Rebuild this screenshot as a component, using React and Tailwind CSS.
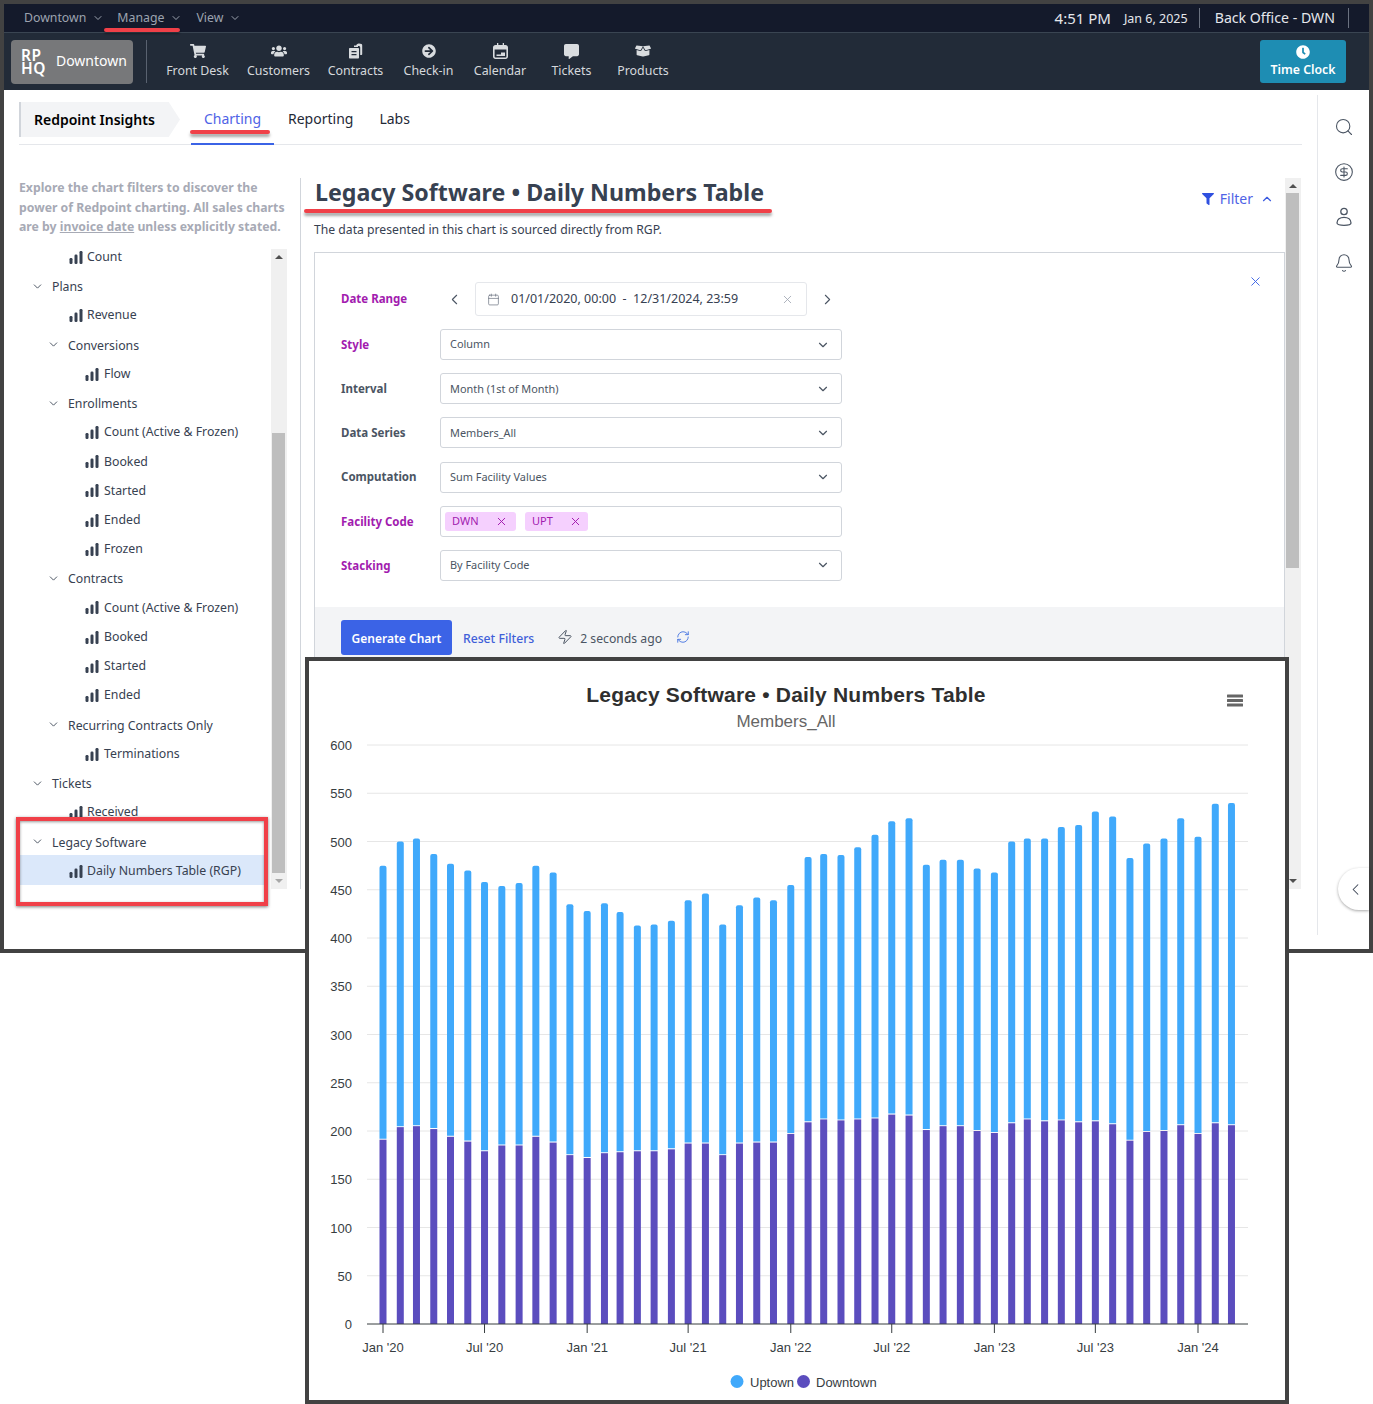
import React from "react";
import { ChevronDown, ChevronUp, ChevronLeft, ChevronRight, X, Calendar, Zap, RefreshCw, Search, CircleDollarSign, Bell } from "lucide-react";
import { FaShoppingCart, FaUsers, FaArrowCircleRight, FaCommentAlt, FaBoxOpen, FaClock, FaFilter } from "react-icons/fa";

const totals = [475,500,503,487,477,470,458,454,457,475,468,435,428,436,427,413,414,418,439,446,414,434,442,439,455,484,487,486,494,507,521,524,476,481,481,472,468,500,503,503,515,517,531,526,483,498,503,524,505,539,540];
const lows = [191,204,205,202,194,189,179,185,185,194,188,175,172,177,178,179,179,181,187,187,175,187,188,188,197,209,212,211,212,213,217,216,201,205,205,200,198,208,212,210,211,209,210,207,190,199,200,206,197,208,206];

const barX = (i) => 383 + ((Date.UTC(2020, i, 1) - Date.UTC(2020, 0, 1)) / 864e5) * (815 / 1461);
const valY = (v) => 1324 - v * 0.965;

function ContractsIcon() {
  return (
    <svg width="16" height="16" viewBox="0 0 16 16" fill="currentColor">
      <path d="M6 2.5h4v1.5H6z M11 0.5l2.5.6c.5.2.7.6.7 1.1V11c0 .6-.4 1-1 1h-1V4.5c0-.9-.6-1.5-1.5-1.5H8c.3-1.3 1.5-2.6 3-2.5z" />
      <path fillRule="evenodd" d="M2 5h8c.6 0 1 .4 1 1v8.5c0 .6-.4 1-1 1H2c-.6 0-1-.4-1-1V6c0-.6.4-1 1-1zm1.5 3v1.3h5V8zm0 3v1.3h5V11z" />
    </svg>
  );
}

function CalendarIcon() {
  return (
    <svg width="15" height="16" viewBox="0 0 15 16" fill="currentColor">
      <path fillRule="evenodd" d="M4 0h1.3v2h4.4V0H11v2h1.5C13.9 2 15 3 15 4.400v9.200C15 15 13.900 16 12.500 16h-10C1.100 16 0 15 0 13.600V4.400C0 3 1.100 2 2.500 2H4zM1.600 6.500v7c0 .6.400 1 1 1h9.800c.6 0 1-.4 1-1v-7z" />
      <path d="M8 9.500h4V13H3.500v-1.500H8z" />
    </svg>
  );
}

function BarsIcon() {
  return (
    <svg width="14" height="13" viewBox="0 0 14 13" fill="#374151" className="shrink-0 translate-y-[1px]">
      <rect x="0.500" y="7" width="3" height="6" rx="1.200" />
      <rect x="5.500" y="3.500" width="3" height="9.500" rx="1.200" />
      <rect x="10.500" y="0" width="3" height="13" rx="1.200" />
    </svg>
  );
}

function UserIcon() {
  return (
    <svg width="16" height="20" viewBox="0 0 16 20" fill="none" stroke="#4b5563" strokeWidth="1.300">
      <circle cx="8" cy="4.500" r="3.200" />
      <path d="M1 16c0-3.500 3-5.700 7-5.700s7 2.200 7 5.700c0 1.300-3 2.300-7 2.300s-7-1-7-2.300z" />
    </svg>
  );
}

function NavItem({ icon, label, w }) {
  return (
    <div className="flex flex-col items-center pb-[3px]" style={{ width: w }}>
      <div className="h-[20px] flex items-center justify-center text-[#d9dcdf] text-[16px]">{icon}</div>
      <div className="text-[12.400px] leading-[17px] mt-[1px] text-[#d5d8dc] whitespace-nowrap">{label}</div>
    </div>
  );
}

function Scrollbar({ thumbTop, thumbH, className, darkDown }) {
  return (
    <div className={"relative bg-[#f0f0f0] shrink-0 " + className}>
      <div className="absolute top-[6px] left-1/2 -translate-x-1/2 w-0 h-0 border-x-[4px] border-x-transparent border-b-[4px] border-b-[#505050]" />
      <div className="absolute left-[1px] right-[2px] bg-[#bebebe]" style={{ top: thumbTop, height: thumbH }} />
      <div className={"absolute bottom-[6px] left-1/2 -translate-x-1/2 w-0 h-0 border-x-[4px] border-x-transparent border-t-[4px] " + (darkDown ? "border-t-[#505050]" : "border-t-[#a8a8a8]")} />
    </div>
  );
}

const tree = [
  ["leaf", 1, "Count"],
  ["node", 0, "Plans"],
  ["leaf", 1, "Revenue"],
  ["node", 1, "Conversions"],
  ["leaf", 2, "Flow"],
  ["node", 1, "Enrollments"],
  ["leaf", 2, "Count (Active & Frozen)"],
  ["leaf", 2, "Booked"],
  ["leaf", 2, "Started"],
  ["leaf", 2, "Ended"],
  ["leaf", 2, "Frozen"],
  ["node", 1, "Contracts"],
  ["leaf", 2, "Count (Active & Frozen)"],
  ["leaf", 2, "Booked"],
  ["leaf", 2, "Started"],
  ["leaf", 2, "Ended"],
  ["node", 1, "Recurring Contracts Only"],
  ["leaf", 2, "Terminations"],
  ["node", 0, "Tickets"],
  ["leaf", 1, "Received"],
  ["node", 0, "Legacy Software"],
  ["leaf", 1, "Daily Numbers Table (RGP)", true],
];

function TreeRow({ kind, level, label, selected }) {
  const pad = kind === "node" ? (level === 0 ? "pl-[11.500px]" : "pl-[27.500px]") : level === 1 ? "pl-[50px]" : "pl-[66px]";
  return (
    <div className={"h-[29.240px] flex items-center text-[12.300px] text-[#374151] whitespace-nowrap " + pad + (selected ? " bg-[#dbe8fa]" : "")}>
      {kind === "node" ? (
        <>
          <ChevronDown size={13} strokeWidth={1.800} className="mr-[8.500px] text-[#4b5563] translate-y-[1px]" />
          <span className="translate-y-[2px]">{label}</span>
        </>
      ) : (
        <>
          <BarsIcon />
          <span className={"translate-y-[1px] " + (level === 2 ? "ml-[5px]" : "ml-[4px]")}>{label}</span>
        </>
      )}
    </div>
  );
}

function Field({ label, purple, children }) {
  return (
    <div className="flex items-center h-[31px] mb-[13.200px]">
      <div className={"w-[99px] text-[11.500px] font-bold " + (purple ? "text-[#a21caf]" : "text-[#4b5563]")}>{label}</div>
      {children}
    </div>
  );
}

function SelectBox({ value }) {
  return (
    <div className="w-[402px] h-full border border-[#d1d5db] rounded-[3px] flex items-center justify-between pl-[9px] pr-[11px] text-[10.900px] text-[#4b5563]">
      <span>{value}</span>
      <ChevronDown size={14} strokeWidth={2} className="text-[#4b5563]" />
    </div>
  );
}

function Tag({ label, w, gap }) {
  return (
    <span className={"h-[19px] rounded-[3px] bg-[#f5d0fe] text-[#a21caf] text-[11px] flex items-center pl-[7px] " + w}>
      <span className={gap}>{label}</span>
      <X size={13} strokeWidth={1.800} />
    </span>
  );
}

function Chart() {
  const ticks = [600, 550, 500, 450, 400, 350, 300, 250, 200, 150, 100, 50, 0];
  const xLabels = [[0, "Jan '20"], [6, "Jul '20"], [12, "Jan '21"], [18, "Jul '21"], [24, "Jan '22"], [30, "Jul '22"], [36, "Jan '23"], [42, "Jul '23"], [48, "Jan '24"]];
  return (
    <svg width="976" height="739" viewBox="309 661 976 739" className="block" fontFamily="'Liberation Sans', Arial, sans-serif">
      <text x="786" y="702" textAnchor="middle" fontSize="21" fontWeight="700" fill="#2f2f2f" letterSpacing="0.200">Legacy Software • Daily Numbers Table</text>
      <text x="786" y="727" textAnchor="middle" fontSize="17" fill="#666666">Members_All</text>
      <g fill="#666666">
        <rect x="1227" y="694.500" width="16" height="3" rx="0.500" />
        <rect x="1227" y="699" width="16" height="3" rx="0.500" />
        <rect x="1227" y="703.500" width="16" height="3" rx="0.500" />
      </g>
      {ticks.map((t) => (
        <g key={t}>
          {t > 0 && <line x1="367" x2="1248" y1={valY(t)} y2={valY(t)} stroke="#e6e6e6" strokeWidth="1" />}
          <text x="352" y={valY(t) + 5} textAnchor="end" fontSize="13" fill="#373d3f">{t}</text>
        </g>
      ))}
      {totals.map((v, i) => {
        const x = barX(i) - 3.500;
        const top = valY(v);
        const mid = valY(lows[i]);
        return (
          <g key={i}>
            <path d={`M${x} ${mid - 1}V${top + 2}a2 2 0 0 1 2 -2h3a2 2 0 0 1 2 2V${mid - 1}z`} fill="#40a9fb" />
            <rect x={x} y={mid} width="7" height={1324 - mid} fill="#5b4dbe" />
          </g>
        );
      })}
      <line x1="367" x2="1248" y1="1324" y2="1324" stroke="#373d3f" strokeWidth="1" />
      {xLabels.map(([i, label]) => (
        <g key={i}>
          <line x1={barX(i)} x2={barX(i)} y1="1324" y2="1333" stroke="#373d3f" strokeWidth="1" />
          <text x={barX(i)} y="1352" textAnchor="middle" fontSize="13" fill="#373d3f">{label}</text>
        </g>
      ))}
      <circle cx="737" cy="1381.500" r="6.500" fill="#40a9fb" />
      <text x="750" y="1387" fontSize="13" fill="#373d3f">Uptown</text>
      <circle cx="803.500" cy="1381.500" r="6.500" fill="#5b4dbe" />
      <text x="816" y="1387" fontSize="13" fill="#373d3f">Downtown</text>
    </svg>
  );
}

export default function App() {
  return (
    <div className="relative w-[1373px] h-[1404px] bg-white overflow-hidden" style={{ fontFamily: "'Noto Sans', sans-serif" }}>
      <div className="h-[953px] border-4 border-[#424242] flex flex-col bg-white">
        {/* top bar */}
        <div className="h-[29px] shrink-0 bg-[#141a2b] border-b border-[#3a4552] flex items-center justify-between pl-[20px] pr-[20px]">
          <div className="flex items-center text-[12.300px] text-[#9ca3af]">
            <span>Downtown</span>
            <ChevronDown size={12} className="ml-[6px] mr-[13px]" />
            <span>Manage</span>
            <ChevronDown size={12} className="ml-[6px] mr-[14px]" />
            <span>View</span>
            <ChevronDown size={12} className="ml-[6px]" />
          </div>
          <div className="flex items-center text-[#e5e7eb]">
            <span className="text-[15px] whitespace-nowrap">4:51 PM</span>
            <span className="text-[12.500px] ml-[13px] whitespace-nowrap translate-y-[1px]">Jan 6, 2025</span>
            <span className="w-px h-[20px] bg-[#6b7280] ml-[11px]" />
            <span className="text-[14.150px] ml-[15px] whitespace-nowrap">Back Office - DWN</span>
            <span className="w-px h-[20px] bg-[#6b7280] ml-[13px]" />
          </div>
        </div>
        {/* nav */}
        <div className="h-[57px] shrink-0 bg-[#222b38] flex items-center pl-[7px] pr-[23px]">
          <div className="w-[122px] h-[44px] rounded-[4px] bg-[#77787a] flex items-center pl-[10px] text-white">
            <div className="text-[15.500px] font-semibold tracking-[0.5px]">
              <div className="h-[13px] leading-[13px]">RP</div>
              <div className="h-[13px] leading-[13px]">HQ</div>
            </div>
            <div className="text-[14px] ml-[10px] mb-[3px]">Downtown</div>
          </div>
          <div className="w-px h-[43px] bg-[#596270] ml-[13px]" />
          <div className="flex items-center ml-[10px]">
            <NavItem w={81} icon={<FaShoppingCart />} label="Front Desk" />
            <NavItem w={81} icon={<FaUsers />} label="Customers" />
            <NavItem w={73} icon={<ContractsIcon />} label="Contracts" />
            <NavItem w={73} icon={<FaArrowCircleRight className="text-[14px]" />} label="Check-in" />
            <NavItem w={70} icon={<CalendarIcon />} label="Calendar" />
            <NavItem w={73} icon={<FaCommentAlt className="text-[15px]" />} label="Tickets" />
            <NavItem w={70} icon={<FaBoxOpen />} label="Products" />
          </div>
          <div className="ml-auto w-[86px] h-[43px] rounded-[3px] bg-[#1e8db3] flex flex-col items-center justify-center text-white">
            <FaClock className="text-[14px] mb-[3px]" />
            <div className="text-[12.300px] leading-[16px] font-semibold">Time Clock</div>
          </div>
        </div>
        {/* body */}
        <div className="flex-1 flex min-h-0">
          <div className="w-[1298px] pl-[15px] shrink-0">
            {/* tabs */}
            <div className="mt-[12px] h-[43px] border-b border-[#e5e7eb] flex items-start relative">
              <div className="h-[35px] w-[161px] bg-[#f3f4f6] border-l-2 border-[#d1d5db] flex items-center pl-[13px] text-[14px] font-semibold text-black [clip-path:polygon(0_0,93%_0,100%_50%,93%_100%,0_100%)]">
                Redpoint Insights
              </div>
              <div className="ml-[11px] w-[83px] h-[43px] border-b-2 border-[#3b63e6] flex justify-center pt-[6px] text-[14px] text-[#4f63e6]">Charting</div>
              <div className="ml-[14px] pt-[6px] text-[14px] text-[#1f2937]">Reporting</div>
              <div className="ml-[26px] pt-[6px] text-[14px] text-[#1f2937]">Labs</div>
            </div>
            {/* columns */}
            <div className="mt-[33px] h-[711px] flex">
              <div className="w-[268px] shrink-0 flex flex-col">
                <p className="text-[12.250px] leading-[19.500px] font-bold text-[#a7aab5] whitespace-nowrap">
                  Explore the chart filters to discover the<br />
                  power of Redpoint charting. All sales charts<br />
                  are by <span className="underline">invoice date</span> unless explicitly stated.
                </p>
                <div className="mt-[12px] flex-1 flex min-h-0">
                  <div className="flex-1 overflow-hidden pb-[4px]">
                    <div className="-mt-[7px] mr-[4px] ml-[2px] -translate-x-[2px]">
                      {tree.map((r, i) => (
                        <TreeRow key={i} kind={r[0]} level={r[1]} label={r[2]} selected={r[3]} />
                      ))}
                    </div>
                  </div>
                  <Scrollbar className="w-[16px]" thumbTop={184} thumbH={440} />
                </div>
              </div>
              <div className="ml-[13px] flex-1 border-l border-[#d1d5db] flex min-w-0">
                <div className="flex-1 min-w-0 overflow-hidden pl-[13px]">
                  <div className="flex items-center justify-between h-[31px]">
                    <h1 className="text-[23.200px] leading-[31px] font-bold text-[#374151] whitespace-nowrap pl-[1px] -translate-y-[1px]">Legacy Software • Daily Numbers Table</h1>
                    <div className="flex items-center text-[#4f63e6] text-[14px] mr-[11px] mt-[10px]">
                      <FaFilter className="text-[12px] text-[#2f50e0]" />
                      <span className="ml-[6px]">Filter</span>
                      <ChevronUp size={14} strokeWidth={2} className="ml-[7px] text-[#3b5be0]" />
                    </div>
                  </div>
                  <p className="mt-[12px] text-[12.200px] leading-[17px] text-[#374151]">The data presented in this chart is sourced directly from RGP.</p>
                  <div className="mt-[14px] border-t border-x border-[#d1d5db] relative">
                    <div className="pl-[26px] pt-[29px] pb-[13px]">
                      <div className="flex items-center h-[34px] mb-[13px]">
                        <div className="w-[99px] text-[11.500px] font-bold text-[#a21caf]">Date Range</div>
                        <ChevronLeft size={17} strokeWidth={1.500} className="ml-[6px] text-[#4b5563]" />
                        <div className="ml-[12px] w-[332px] h-full border border-[#e5e7eb] rounded-[3px] flex items-center pl-[11px] pr-[12px] text-[12.500px] text-[#374151] whitespace-pre">
                          <Calendar size={13} strokeWidth={1.300} className="text-[#6b7280] mr-[11px]" />
                          <span>01/01/2020, 00:00  -  12/31/2024, 23:59</span>
                          <X size={13} strokeWidth={1.500} className="ml-auto text-[#9ca3af]" />
                        </div>
                        <ChevronRight size={17} strokeWidth={1.500} className="ml-[12px] text-[#4b5563]" />
                      </div>
                      <Field label="Style" purple><SelectBox value="Column" /></Field>
                      <Field label="Interval"><SelectBox value="Month (1st of Month)" /></Field>
                      <Field label="Data Series"><SelectBox value="Members_All" /></Field>
                      <Field label="Computation"><SelectBox value="Sum Facility Values" /></Field>
                      <Field label="Facility Code" purple>
                        <div className="w-[402px] h-full border border-[#d1d5db] rounded-[3px] flex items-center pl-[4px] gap-[9px]">
                          <Tag label="DWN" w="w-[71px]" gap="w-[43px]" />
                          <Tag label="UPT" w="w-[63px]" gap="w-[37px]" />
                        </div>
                      </Field>
                      <Field label="Stacking" purple><SelectBox value="By Facility Code" /></Field>
                    </div>
                    <div className="bg-[#f3f4f6] h-[200px] pl-[26px] pt-[13px] flex items-start">
                      <div className="w-[111px] h-[35px] rounded-[3px] bg-[#3b63e6] text-white text-[12px] font-semibold flex items-center justify-center pt-[3px]">Generate Chart</div>
                      <div className="ml-[11px] h-[38px] flex items-center text-[12.200px] font-medium text-[#3f5fd9]">Reset Filters</div>
                      <Zap size={16} strokeWidth={1.500} className="ml-[23px] mt-[9px] text-[#4b5563]" />
                      <div className="ml-[7px] h-[38px] flex items-center text-[12.200px] text-[#4b5563]">2 seconds ago</div>
                      <RefreshCw size={14} strokeWidth={1.500} className="ml-[14px] mt-[10px] text-[#3f6fe0]" />
                    </div>
                    <div className="absolute right-[21px] top-[21px] text-[#3b63e6]"><X size={15} strokeWidth={1.500} /></div>
                  </div>
                </div>
                <Scrollbar className="w-[16px] mr-[1px]" thumbTop={15} thumbH={375} darkDown />
              </div>
            </div>
          </div>
          {/* right rail */}
          <div className="ml-[15px] mt-[5px] mb-[14px] flex-1 border-l border-[#e5e7eb] flex flex-col items-center pt-[22px] gap-[25px] text-[#4b5563] relative">
            <Search size={20} strokeWidth={1.300} />
            <CircleDollarSign size={20} strokeWidth={1.300} />
            <UserIcon />
            <Bell size={20} strokeWidth={1.300} className="translate-y-[1px]" />
            <div className="absolute right-0 top-[773px] w-[31px] h-[42px] bg-white rounded-l-[21px] shadow-[0_1px_3px_rgba(0,0,0,0.35)] flex items-center pl-[8px]">
              <ChevronLeft size={19} strokeWidth={1.300} className="text-[#374151]" />
            </div>
          </div>
        </div>
      </div>

      {/* chart window */}
      <div className="absolute left-[305px] top-[657px] w-[984px] h-[747px] border-4 border-[#424242] bg-white">
        <Chart />
      </div>

      {/* annotations */}
      <div className="absolute left-[104px] top-[28px] w-[76px] h-[3.500px] rounded-full bg-[#f04048] shadow-[0_2px_2px_rgba(0,0,0,0.3)]" />
      <div className="absolute left-[190px] top-[130px] w-[80px] h-[3.500px] rounded-full bg-[#f04048] shadow-[0_3px_3px_rgba(0,0,0,0.35)]" />
      <div className="absolute left-[304px] top-[209px] w-[468px] h-[3.500px] rounded-full bg-[#f04048] shadow-[0_3px_3px_rgba(0,0,0,0.35)]" />
      <div className="absolute left-[16px] top-[817px] w-[252px] h-[89px] border-4 border-[#f04048] shadow-[0_1px_3px_rgba(0,0,0,0.5),inset_0_1px_3px_rgba(0,0,0,0.4)]" />
    </div>
  );
}
